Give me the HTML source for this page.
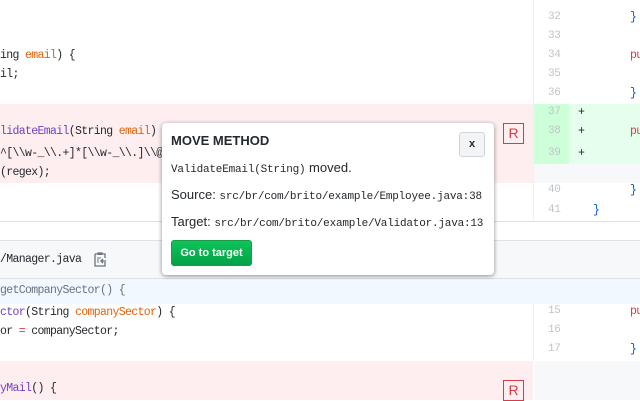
<!DOCTYPE html>
<html><head><meta charset="utf-8"><style>
*{margin:0;padding:0;box-sizing:border-box}
body{width:640px;height:400px;overflow:hidden;background:#fff;position:relative;font-family:"Liberation Sans",sans-serif}
.a{position:absolute}
.m{font-family:"Liberation Mono",monospace;font-size:11.5px;letter-spacing:-0.65px;color:#24292e;white-space:pre}
.ln{font-family:"Liberation Mono",monospace;font-size:11px;letter-spacing:-0.3px;color:#c0c3c7;position:absolute;left:548px}
.k{color:#d73a49}.v{color:#e36209}.f{color:#6f42c1}.b{color:#005cc5}
.R{position:absolute;width:21px;height:21px;border:1px solid #d73a49;color:#d73a49;font-size:14px;text-align:center;line-height:19px}
</style></head><body>
<div class="a" style="left:533px;top:0;width:1px;height:221px;background:#eef0f2"></div>
<div class="a" style="left:0;top:104px;width:533px;height:79px;background:#ffeef0"></div>
<div class="a" style="left:534px;top:104px;width:106px;height:60px;background:#e6ffed"></div>
<div class="a" style="left:534px;top:104px;width:35px;height:60px;background:#cdffd8"></div>
<div class="a" style="left:534px;top:164px;width:106px;height:19px;background:#f6f8fa"></div>
<div class="a" style="left:0;top:221px;width:640px;height:1px;background:#dfe2e5"></div>
<div class="a" style="left:0;top:240px;width:640px;height:39px;background:#f6f8fa;border-top:1px solid #dfe2e5;border-bottom:1px solid #dfe2e5"></div>
<div class="a" style="left:0;top:279px;width:640px;height:25px;background:#f1f8ff"></div>
<div class="a" style="left:533px;top:304px;width:1px;height:57px;background:#eef0f2"></div>
<div class="a" style="left:0;top:361px;width:533px;height:39px;background:#ffeef0"></div>
<div class="a" style="left:534px;top:361px;width:106px;height:39px;background:#f6f8fa"></div>

<div class="a m" style="left:0;top:49px">ing <span class="v">email</span>) {</div>
<div class="a m" style="left:0;top:68px">il;</div>
<div class="a m" style="left:0;top:125px"><span class="f">lidateEmail</span>(String <span class="v">email</span>)</div>
<div class="a m" style="left:0;top:147px">^[\\w-_\\.+]*[\\w-_\\.]\\@</div>
<div class="a m" style="left:0;top:166px">(regex);</div>
<div class="a m" style="left:0;top:253px">/Manager.java</div>
<svg class="a" style="left:93px;top:251px" width="14" height="16" viewBox="0 0 14 16"><path d="M2 3h3V2h4v1h3v4M12 11v4H2V3" fill="none" stroke="#6a737d" stroke-width="1.3"/><path d="M5 2h4v2H5z" fill="#6a737d"/><path d="M13 10H8M10 8l-2 2 2 2" fill="none" stroke="#6a737d" stroke-width="1.3"/><path d="M4 7h4M4 9h2M4 11h2" stroke="#6a737d"/></svg>
<div class="a m" style="left:0;top:284px;color:#6a737d">getCompanySector() {</div>
<div class="a m" style="left:0;top:306px"><span class="f">ctor</span>(String <span class="v">companySector</span>) {</div>
<div class="a m" style="left:0;top:325px">or <span class="k">=</span> companySector;</div>
<div class="a m" style="left:0;top:382px"><span class="f">yMail</span>() {</div>

<div class="ln" style="top:11px">32</div><div class="a m b" style="left:630px;top:11px">}</div>
<div class="ln" style="top:30px">33</div>
<div class="ln" style="top:49px">34</div><div class="a m k" style="left:630px;top:49px">pu</div>
<div class="ln" style="top:68px">35</div>
<div class="ln" style="top:87px">36</div><div class="a m b" style="left:630px;top:87px">}</div>
<div class="ln" style="top:106px">37</div><div class="a m" style="left:578px;top:106px">+</div>
<div class="ln" style="top:125px">38</div><div class="a m" style="left:578px;top:125px">+</div><div class="a m k" style="left:630px;top:125px">pu</div>
<div class="ln" style="top:147px">39</div><div class="a m" style="left:578px;top:147px">+</div>
<div class="ln" style="top:184px">40</div><div class="a m b" style="left:630px;top:184px">}</div>
<div class="ln" style="top:204px">41</div><div class="a m b" style="left:593px;top:204px">}</div>
<div class="ln" style="top:305px">15</div><div class="a m k" style="left:630px;top:305px">pu</div>
<div class="ln" style="top:324px">16</div>
<div class="ln" style="top:343px">17</div><div class="a m b" style="left:630px;top:343px">}</div>

<div class="R" style="left:503px;top:123px">R</div>
<div class="R" style="left:503px;top:380px">R</div>

<div class="a" style="left:162px;top:123px;width:332px;height:152px;background:#fff;border-radius:4px;box-shadow:0 1px 5px rgba(0,0,0,.45)">
  <div class="a" style="left:9px;top:10px;font-weight:bold;font-size:13px;color:#24292e">MOVE METHOD</div>
  <div class="a" style="left:297px;top:9px;width:26px;height:25px;border:1px solid #d1d5da;border-radius:3px;background:#f3f4f6;font-weight:bold;font-size:11px;text-align:center;line-height:23px;color:#24292e">x</div>
  <div class="a" style="left:9px;top:37px;font-size:13px;color:#24292e;white-space:nowrap"><span style="font-family:'Liberation Mono',monospace;font-size:11px;letter-spacing:-0.2px">ValidateEmail(String)</span> moved.</div>
  <div class="a" style="left:9px;top:64px;font-size:13px;color:#24292e;white-space:nowrap">Source: <span style="font-family:'Liberation Mono',monospace;font-size:11px;letter-spacing:-0.2px">src/br/com/brito/example/Employee.java:38</span></div>
  <div class="a" style="left:9px;top:91px;font-size:13px;color:#24292e;white-space:nowrap">Target: <span style="font-family:'Liberation Mono',monospace;font-size:11px;letter-spacing:-0.2px">src/br/com/brito/example/Validator.java:13</span></div>
  <div class="a" style="left:9px;top:117px;width:81px;height:26px;border-radius:3px;background:linear-gradient(#0cc55a,#02a246);border:1px solid #1b9a4a;color:#fff;font-weight:bold;font-size:11px;text-align:center;line-height:24px">Go to target</div>
</div>
</body></html>
